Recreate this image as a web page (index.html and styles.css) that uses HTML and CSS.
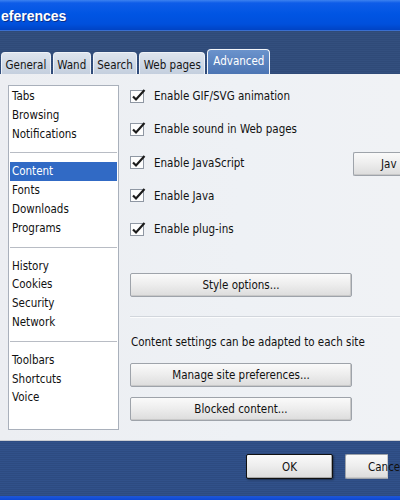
FILE: index.html
```html
<!DOCTYPE html>
<html>
<head>
<meta charset="utf-8">
<link rel="stylesheet" href="styles.css">
</head>
<body>
<div class="dialog">
  <div class="titlebar"><span class="title">eferences</span></div>
  <div class="tabstrip">
    <div class="tab">General</div>
    <div class="tab">Wand</div>
    <div class="tab">Search</div>
    <div class="tab">Web pages</div>
    <div class="tab active">Advanced</div>
  </div>
  <div class="content">
    <div class="listbox">
      <div class="group">
        <div class="item">Tabs</div>
        <div class="item">Browsing</div>
        <div class="item">Notifications</div>
      </div>
      <div class="group">
        <div class="item selected">Content</div>
        <div class="item">Fonts</div>
        <div class="item">Downloads</div>
        <div class="item">Programs</div>
      </div>
      <div class="group">
        <div class="item">History</div>
        <div class="item">Cookies</div>
        <div class="item">Security</div>
        <div class="item">Network</div>
      </div>
      <div class="group last">
        <div class="item">Toolbars</div>
        <div class="item">Shortcuts</div>
        <div class="item">Voice</div>
      </div>
    </div>
    <div class="panel">
      <div class="checks">
        <label class="check"><span class="box"><svg width="17" height="15" viewBox="0 0 17 15"><rect x="0.5" y="2.5" width="13" height="12" fill="#fdfdfd" stroke="#8f97a3"/><path d="M3 8.5 L6 11.5 L14.5 2" fill="none" stroke="#1b1b1b" stroke-width="2.2"/></svg></span>Enable GIF/SVG animation</label>
        <label class="check"><span class="box"><svg width="17" height="15" viewBox="0 0 17 15"><rect x="0.5" y="2.5" width="13" height="12" fill="#fdfdfd" stroke="#8f97a3"/><path d="M3 8.5 L6 11.5 L14.5 2" fill="none" stroke="#1b1b1b" stroke-width="2.2"/></svg></span>Enable sound in Web pages</label>
        <div class="row">
          <label class="check"><span class="box"><svg width="17" height="15" viewBox="0 0 17 15"><rect x="0.5" y="2.5" width="13" height="12" fill="#fdfdfd" stroke="#8f97a3"/><path d="M3 8.5 L6 11.5 L14.5 2" fill="none" stroke="#1b1b1b" stroke-width="2.2"/></svg></span>Enable JavaScript</label>
          <button class="btn jsbtn">Jav</button>
        </div>
        <label class="check"><span class="box"><svg width="17" height="15" viewBox="0 0 17 15"><rect x="0.5" y="2.5" width="13" height="12" fill="#fdfdfd" stroke="#8f97a3"/><path d="M3 8.5 L6 11.5 L14.5 2" fill="none" stroke="#1b1b1b" stroke-width="2.2"/></svg></span>Enable Java</label>
        <label class="check"><span class="box"><svg width="17" height="15" viewBox="0 0 17 15"><rect x="0.5" y="2.5" width="13" height="12" fill="#fdfdfd" stroke="#8f97a3"/><path d="M3 8.5 L6 11.5 L14.5 2" fill="none" stroke="#1b1b1b" stroke-width="2.2"/></svg></span>Enable plug-ins</label>
      </div>
      <button class="btn wide style">Style options...</button>
      <div class="sep"></div>
      <div class="note">Content settings can be adapted to each site</div>
      <button class="btn wide">Manage site preferences...</button>
      <button class="btn wide">Blocked content...</button>
    </div>
  </div>
  <div class="footer">
    <button class="btn fbtn ok">OK</button>
    <button class="btn fbtn cancel">Cance</button>
  </div>
  <div class="taskbar"></div>
</div>
</body>
</html>
```
FILE: styles.css
```css
html, body {
  margin: 0;
  padding: 0;
  width: 400px;
  height: 500px;
  overflow: hidden;
  background: #2e4d84;
}
.dialog {
  width: 400px;
  overflow: hidden;
  font-family: "DejaVu Sans Condensed", "DejaVu Sans", sans-serif;
  font-size: 11px;
  color: #111;
}
.titlebar {
  height: 30px;
  background: linear-gradient(#3c82f0 0px, #0e5ce8 3px, #0055e3 14px, #0050dc 24px, #0043c4 30px);
  display: flex;
  align-items: center;
}
.title {
  color: #fff;
  font-family: "Liberation Sans", Arial, sans-serif;
  font-weight: bold;
  font-size: 14px;
  padding-left: 1px;
  padding-top: 2px;
  text-shadow: 1px 1px 0 #0a2f8a;
}
.tabstrip {
  height: 44px;
  box-sizing: border-box;
  border-top: 1px solid #3a6fd0;
  background: repeating-linear-gradient(#2f4a78 0px, #2f4a78 1px, #334f7e 1px, #334f7e 2px);
  display: flex;
  align-items: flex-end;
  gap: 2px;
  padding-left: 1px;
}
.tab {
  height: 22px;
  box-sizing: border-box;
  padding: 5px 3.5px 0 3.5px;
  border: 1px solid #eef2f8;
  border-bottom: none;
  border-radius: 4px 4px 0 0;
  background: linear-gradient(#dde4ee, #c4cfde);
  color: #151515;
  font-size: 11.5px;
}
.tab.active {
  height: 25px;
  padding: 4px 5px 0 5px;
  background: linear-gradient(#6b93cc, #4b74b3);
  color: #fff;
  border-color: #f4f6fa;
}
.content {
  height: 366px;
  box-sizing: border-box;
  background: linear-gradient(90deg, #eceef2, #eef1f5 60%, #f0f2f5);
  display: flex;
  padding: 11px 0 0 8px;
}
.listbox {
  width: 111px;
  flex: none;
  height: 345px;
  box-sizing: border-box;
  background: #fff;
  border: 1px solid #a9b0bb;
  padding: 1px 1px 0 1px;
}
.group {
  border-bottom: 1px solid #b8bcc4;
  padding-bottom: 9px;
  margin-bottom: 9px;
}
.group.last {
  border-bottom: none;
}
.item {
  height: 18.8px;
  line-height: 18.8px;
  padding-left: 2px;
  font-size: 11.5px;
}
.item.selected {
  background: #316ac5;
  color: #fff;
}
.panel {
  margin-left: 11px;
  padding-top: 1px;
  flex: 1;
  display: flex;
  flex-direction: column;
  align-items: flex-start;
  min-width: 0;
}
.checks {
  display: flex;
  flex-direction: column;
  gap: 13.3px;
  width: 100%;
}
.row {
  display: flex;
  align-items: center;
  height: 20px;
}
.check {
  height: 20px;
  display: flex;
  align-items: center;
  font-size: 11.5px;
  width: 223px;
  flex: none;
}
.box {
  width: 24px;
  height: 15px;
  display: flex;
  margin-top: -2px;
}
.btn {
  font-family: "DejaVu Sans Condensed", "DejaVu Sans", sans-serif;
  font-size: 11.5px;
  color: #111;
  height: 24px;
  border: 1px solid #9ea3aa;
  border-radius: 2px;
  background: linear-gradient(#fafafa, #eeeeee 45%, #dcdcdc);
  padding: 0;
  box-shadow: inset -1px -1px 0 #c8c8c8;
  white-space: nowrap;
  flex: none;
}
.jsbtn {
  width: 60px;
  margin-top: 3px;
  text-align: left;
  padding-left: 27px;
  border-right: none;
  border-radius: 2px 0 0 2px;
}
.wide {
  width: 222px;
}
.style {
  margin-top: 34px;
}
.sep {
  width: 100%;
  height: 1px;
  background: #d2d6dc;
  border-bottom: 1px solid #fbfcfd;
  margin-top: 19px;
}
.note {
  font-size: 11.5px;
  margin-top: 17px;
  padding-left: 1px;
  line-height: 15px;
}
.note + .btn {
  margin-top: 13px;
}
.note + .btn + .btn {
  margin-top: 10px;
}
.footer {
  height: 56px;
  box-sizing: border-box;
  border-top: 1px solid #c9ccd2;
  background: repeating-linear-gradient(#2d4b81 0px, #2d4b81 1px, #31518a 1px, #31518a 2px);
  display: flex;
  padding: 13px 0 0 246px;
  gap: 12px;
}
.fbtn {
  width: 87px;
  height: 25px;
}
.cancel {
  width: 43px;
  text-align: left;
  padding-left: 22px;
  border-right: none;
  border-radius: 2px 0 0 2px;
}
.ok {
  border: 1px solid #111;
  box-shadow: inset -1px -1px 0 #a9a9a9, 1px 1px 2px rgba(0,0,0,0.4);
}
.taskbar {
  height: 4px;
  background: linear-gradient(#1f57d8, #0c48d6);
}
```
